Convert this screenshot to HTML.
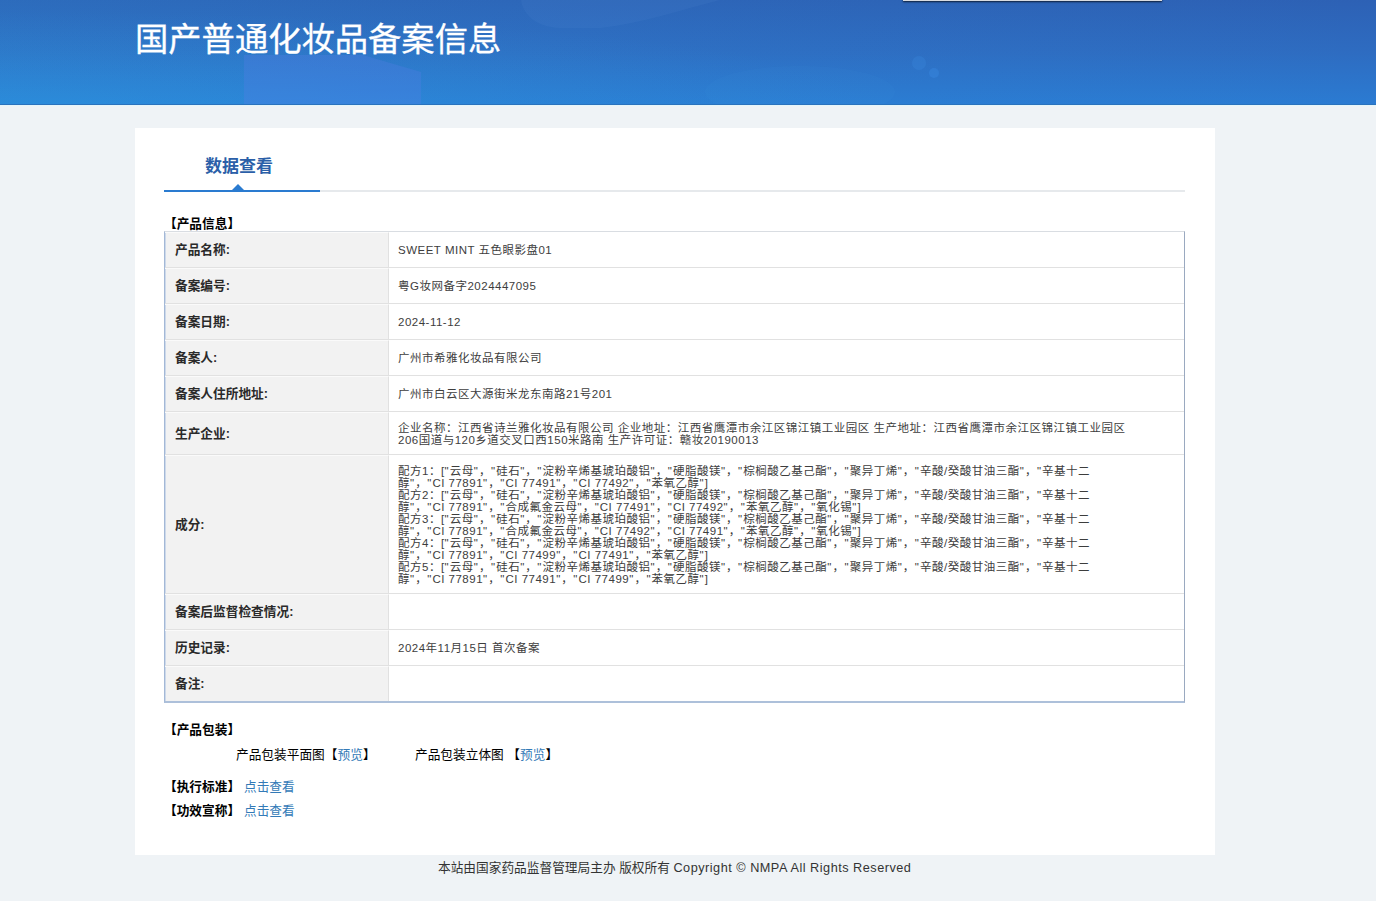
<!DOCTYPE html>
<html lang="zh-CN">
<head>
<meta charset="utf-8">
<title>国产普通化妆品备案信息</title>
<style>
*{box-sizing:border-box;}
html,body{margin:0;padding:0;}
body{width:1376px;height:901px;overflow:hidden;background:linear-gradient(180deg,#e4f5fa 0,#e4f5fa 106px,#eff3f6 106px) #eff3f6;font-family:"Liberation Sans","Noto Sans CJK SC",sans-serif;font-size:12px;color:#333;position:relative;}
.hdr{position:absolute;left:0;top:0;width:1376px;height:105px;overflow:hidden;
background:radial-gradient(ellipse 900px 95px at 0 105px,rgba(43,170,235,.24),rgba(43,170,235,0) 100%),linear-gradient(90deg,rgba(43,170,230,.15) 0%,rgba(43,170,230,.06) 50%,rgba(43,170,230,0) 100%),linear-gradient(180deg,#2d61b5 0%,#2e6cc1 50%,#2b7bd2 100%);border-bottom:1px solid #2a72bd;}
.hdr svg{position:absolute;left:0;top:0;}
.hdr .bar{position:absolute;left:903px;top:-3px;width:259px;height:4px;background:#d8dbe0;box-shadow:0 1px 2px rgba(0,0,0,.7);}
.hdr h1{position:absolute;left:135px;top:18px;margin:0;font-weight:400;font-size:33.3px;line-height:44px;color:#fff;letter-spacing:0;white-space:nowrap;-webkit-text-stroke:.3px #fff;}
.card{position:absolute;left:135px;top:128px;width:1080px;height:727px;background:#fff;}
.tab{position:absolute;left:70px;top:27.5px;font-size:17px;font-weight:700;color:#2b5fa8;line-height:22px;white-space:nowrap;}
.tline{position:absolute;left:29px;top:62px;width:1021px;height:2px;background:#e6e9ec;}
.tline b{position:absolute;left:0;top:0;width:156px;height:2px;background:#2a7bd0;display:block;}
.tri{position:absolute;left:97px;top:56px;width:0;height:0;border-left:6px solid transparent;border-right:6px solid transparent;border-bottom:6px solid #2a7bd0;}
.sec{position:absolute;left:29px;font-weight:700;color:#000;font-size:12.7px;line-height:14px;white-space:nowrap;}
table{position:absolute;left:29px;top:103px;width:1021px;border-collapse:separate;border-spacing:0;border:1px solid #a3b8d6;border-top-color:#d9dde2;border-right-color:#9aa9c0;border-bottom:2px solid #adc0da;table-layout:fixed;}
td{border-bottom:1px solid #e1e1e1;padding:0 9px;font-size:11.5px;letter-spacing:.5px;line-height:12px;color:#3d3d3d;vertical-align:middle;white-space:nowrap;}
tr:last-child td{border-bottom:none;}
td.l{width:224px;background:#f2f2f2;font-weight:700;color:#2a2a2a;font-size:12.7px;letter-spacing:0;box-shadow:inset 1px 0 0 #cdd9ea;border-right:1px solid #e1e1e1;border-top:1px solid #fafafa;padding-left:10px;}
td i{font-style:normal;letter-spacing:1.1px;}
td.f div{white-space:normal;position:relative;top:1px;}
.w1{width:698px;}
.w2{width:738px;}
a{color:#337ab7;text-decoration:none;}
.ft{position:absolute;left:438px;top:859px;font-size:12.7px;color:#333;line-height:18px;white-space:nowrap;}
.p{position:absolute;font-size:12.7px;line-height:16px;color:#000;white-space:nowrap;}
.ft span{letter-spacing:.5px;}
</style>
</head>
<body>
<div class="hdr"><svg width="1376" height="105" viewBox="0 0 1376 105"><polygon points="244,55 363,55 421,72 421,105 244,105" fill="#5a7fe8" fill-opacity=".28"/><path d="M521,0 C523,14 536,27 560,28 L600,28 C640,24 680,10 720,0 Z" fill="#6fa0e6" fill-opacity=".08"/><ellipse cx="800" cy="92" rx="95" ry="26" fill="#4a9ae8" fill-opacity=".07"/><circle cx="919" cy="63" r="7" fill="#3f93ea" fill-opacity=".22"/><circle cx="934" cy="73" r="5" fill="#3f93ea" fill-opacity=".3"/></svg><div class="bar"></div><h1>国产普通化妆品备案信息</h1></div>
<div class="card">
  <div class="tab">数据查看</div>
  <div class="tline"><b></b></div>
  <div class="tri"></div>
  <div class="sec" style="top:89px">【产品信息】</div>
  <table>
    <tr style="height:36px"><td class="l">产品名称:</td><td class="v">SWEET MINT 五色眼影盘01</td></tr>
    <tr style="height:36px"><td class="l">备案编号:</td><td class="v">粤G妆网备字2024447095</td></tr>
    <tr style="height:36px"><td class="l">备案日期:</td><td class="v">2024-11-12</td></tr>
    <tr style="height:36px"><td class="l">备案人:</td><td class="v">广州市希雅化妆品有限公司</td></tr>
    <tr style="height:36px"><td class="l">备案人住所地址:</td><td class="v">广州市白云区大源街米龙东南路21号201</td></tr>
    <tr style="height:43px"><td class="l">生产企业:</td><td class="v f"><div class="w2">企业名称：江西省诗兰雅化妆品有限公司 企业地址：江西省鹰潭市余江区锦江镇工业园区 生产地址：江西省鹰潭市余江区锦江镇工业园区206国道与120乡道交叉口西150米路南 生产许可证：赣妆20190013</div></td></tr>
    <tr style="height:139px"><td class="l">成分:</td><td class="v f"><div class="w1">配方1：[<i>"</i>云母<i>"</i>，<i>"</i>硅石<i>"</i>，<i>"</i>淀粉辛烯基琥珀酸铝<i>"</i>，<i>"</i>硬脂酸镁<i>"</i>，<i>"</i>棕榈酸乙基己酯<i>"</i>，<i>"</i>聚异丁烯<i>"</i>，<i>"</i>辛酸/癸酸甘油三酯<i>"</i>，<i>"</i>辛基十二醇<i>"</i>，<i>"</i>CI 77891<i>"</i>，<i>"</i>CI 77491<i>"</i>，<i>"</i>CI 77492<i>"</i>，<i>"</i>苯氧乙醇<i>"</i>]<br>配方2：[<i>"</i>云母<i>"</i>，<i>"</i>硅石<i>"</i>，<i>"</i>淀粉辛烯基琥珀酸铝<i>"</i>，<i>"</i>硬脂酸镁<i>"</i>，<i>"</i>棕榈酸乙基己酯<i>"</i>，<i>"</i>聚异丁烯<i>"</i>，<i>"</i>辛酸/癸酸甘油三酯<i>"</i>，<i>"</i>辛基十二醇<i>"</i>，<i>"</i>CI 77891<i>"</i>，<i>"</i>合成氟金云母<i>"</i>，<i>"</i>CI 77491<i>"</i>，<i>"</i>CI 77492<i>"</i>，<i>"</i>苯氧乙醇<i>"</i>，<i>"</i>氧化锡<i>"</i>]<br>配方3：[<i>"</i>云母<i>"</i>，<i>"</i>硅石<i>"</i>，<i>"</i>淀粉辛烯基琥珀酸铝<i>"</i>，<i>"</i>硬脂酸镁<i>"</i>，<i>"</i>棕榈酸乙基己酯<i>"</i>，<i>"</i>聚异丁烯<i>"</i>，<i>"</i>辛酸/癸酸甘油三酯<i>"</i>，<i>"</i>辛基十二醇<i>"</i>，<i>"</i>CI 77891<i>"</i>，<i>"</i>合成氟金云母<i>"</i>，<i>"</i>CI 77492<i>"</i>，<i>"</i>CI 77491<i>"</i>，<i>"</i>苯氧乙醇<i>"</i>，<i>"</i>氧化锡<i>"</i>]<br>配方4：[<i>"</i>云母<i>"</i>，<i>"</i>硅石<i>"</i>，<i>"</i>淀粉辛烯基琥珀酸铝<i>"</i>，<i>"</i>硬脂酸镁<i>"</i>，<i>"</i>棕榈酸乙基己酯<i>"</i>，<i>"</i>聚异丁烯<i>"</i>，<i>"</i>辛酸/癸酸甘油三酯<i>"</i>，<i>"</i>辛基十二醇<i>"</i>，<i>"</i>CI 77891<i>"</i>，<i>"</i>CI 77499<i>"</i>，<i>"</i>CI 77491<i>"</i>，<i>"</i>苯氧乙醇<i>"</i>]<br>配方5：[<i>"</i>云母<i>"</i>，<i>"</i>硅石<i>"</i>，<i>"</i>淀粉辛烯基琥珀酸铝<i>"</i>，<i>"</i>硬脂酸镁<i>"</i>，<i>"</i>棕榈酸乙基己酯<i>"</i>，<i>"</i>聚异丁烯<i>"</i>，<i>"</i>辛酸/癸酸甘油三酯<i>"</i>，<i>"</i>辛基十二醇<i>"</i>，<i>"</i>CI 77891<i>"</i>，<i>"</i>CI 77491<i>"</i>，<i>"</i>CI 77499<i>"</i>，<i>"</i>苯氧乙醇<i>"</i>]</div></td></tr>
    <tr style="height:36px"><td class="l">备案后监督检查情况:</td><td class="v"></td></tr>
    <tr style="height:36px"><td class="l">历史记录:</td><td class="v">2024年11月15日 首次备案</td></tr>
    <tr style="height:35px"><td class="l">备注:</td><td class="v"></td></tr>
  </table>
  <div class="sec" style="top:595px">【产品包装】</div>
  <div class="p" style="left:101px;top:619px">产品包装平面图【<a>预览</a>】</div>
  <div class="p" style="left:280px;top:619px">产品包装立体图 【<a>预览</a>】</div>
  <div class="sec" style="top:652px">【执行标准】</div>
  <div class="p" style="left:109px;top:651px"><a>点击查看</a></div>
  <div class="sec" style="top:676px">【功效宣称】</div>
  <div class="p" style="left:109px;top:675px"><a>点击查看</a></div>
</div>
<div class="ft">本站由国家药品监督管理局主办 版权所有 <span>Copyright © NMPA All Rights Reserved</span></div>
</body>
</html>
